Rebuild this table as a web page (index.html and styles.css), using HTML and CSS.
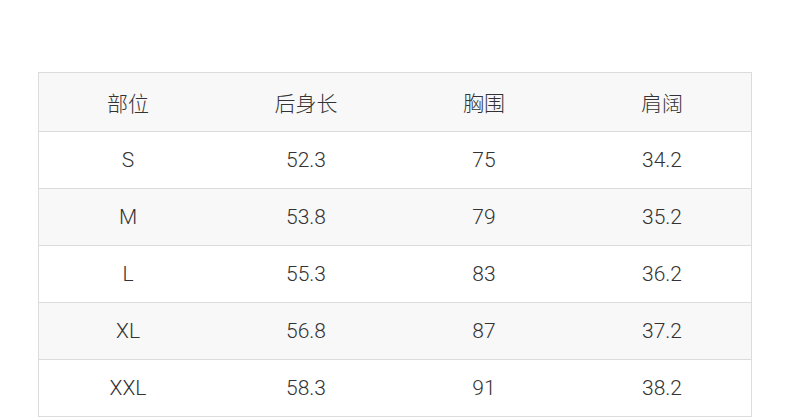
FILE: index.html
```html
<!DOCTYPE html>
<html lang="zh">
<head>
<meta charset="utf-8">
<link rel="stylesheet" href="styles.css">
</head>
<body>
<div class="page">
  <div class="table">
    <div class="row head"><div>部位</div><div>后身长</div><div>胸围</div><div>肩阔</div></div>
    <div class="row"><div>S</div><div>52.3</div><div>75</div><div>34.2</div></div>
    <div class="row alt"><div>M</div><div>53.8</div><div>79</div><div>35.2</div></div>
    <div class="row"><div>L</div><div>55.3</div><div>83</div><div>36.2</div></div>
    <div class="row alt"><div>XL</div><div>56.8</div><div>87</div><div>37.2</div></div>
    <div class="row"><div>XXL</div><div>58.3</div><div>91</div><div>38.2</div></div>
  </div>
</div>
</body>
</html>
```
FILE: styles.css
```css
html, body { margin: 0; padding: 0; background: #fff; }
.page { padding: 72px 38px 0 38px; }
.table {
  width: 714px;
  border: 1px solid #dcdcdc;
  box-sizing: border-box;
  font-family: Roboto, "Noto Sans CJK SC", sans-serif;
  font-weight: 300;
  font-size: 21px;
  color: #333;
}
.row {
  display: grid;
  grid-template-columns: repeat(4, 1fr);
  height: 56px;
  align-items: center;
  text-align: center;
  border-top: 1px solid #dcdcdc;
  background: #fff;
}
.row.head { border-top: 0; height: 58px; background: #f8f8f8; }
.row.alt { background: #f8f8f8; }
```
